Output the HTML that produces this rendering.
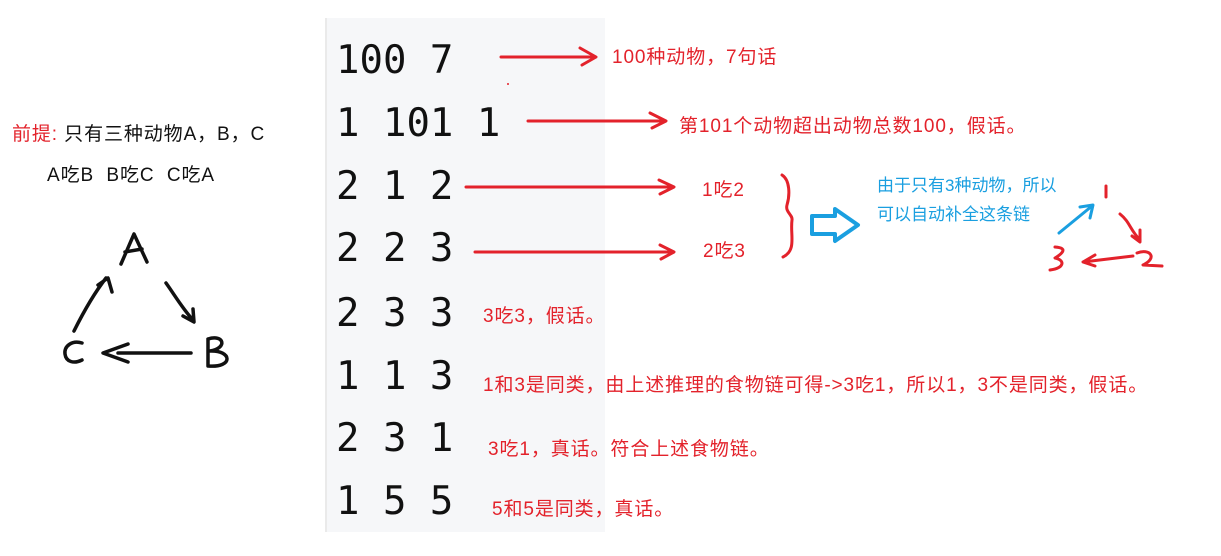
<!DOCTYPE html>
<html><head><meta charset="utf-8"><style>
body{margin:0;width:1221px;height:556px;background:#fff;position:relative;overflow:hidden;font-family:"Liberation Sans","Noto Sans CJK SC",sans-serif}
.code{position:absolute;left:325px;top:18px;width:278px;height:514px;background:#f6f7f9;border-left:2px solid #eaeaea}
.c{position:absolute;left:336px;font-family:"DejaVu Sans Mono","Liberation Mono",monospace;font-size:39px;color:#111;line-height:1}
.r{position:absolute;color:#e3222b;font-size:19px;letter-spacing:0.9px;white-space:nowrap}
.k{position:absolute;color:#111;font-size:19px;letter-spacing:0.9px;white-space:nowrap}
.b{position:absolute;color:#1a9fe0;font-size:17px;line-height:29px}
svg{position:absolute;left:0;top:0}
</style></head><body>
<div class="code"></div>
<div class="c" style="top:41px">100 7</div>
<div class="c" style="top:104px">1 101 1</div>
<div class="c" style="top:167px">2 1 2</div>
<div class="c" style="top:229px">2 2 3</div>
<div class="c" style="top:294px">2 3 3</div>
<div class="c" style="top:357px">1 1 3</div>
<div class="c" style="top:419px">2 3 1</div>
<div class="c" style="top:482px">1 5 5</div>

<div class="r" style="left:612px;top:42px">100种动物，7句话</div>
<div class="r" style="left:679px;top:111px">第101个动物超出动物总数100，假话。</div>
<div class="r" style="left:702px;top:175px">1吃2</div>
<div class="r" style="left:703px;top:236px">2吃3</div>
<div class="r" style="left:483px;top:301px">3吃3，假话。</div>
<div class="r" style="left:483px;top:370px">1和3是同类，由上述推理的食物链可得-&gt;3吃1，所以1，3不是同类，假话。</div>
<div class="r" style="left:488px;top:434px">3吃1，真话。符合上述食物链。</div>
<div class="r" style="left:492px;top:494px">5和5是同类，真话。</div>

<div class="k" style="left:12px;top:119px"><span style="color:#e3222b">前提:</span> 只有三种动物A，B，C</div>
<div class="k" style="left:47px;top:160px">A吃B&nbsp; B吃C&nbsp; C吃A</div>
<div class="b" style="left:877px;top:171px">由于只有3种动物，所以<br>可以自动补全这条链</div>

<svg width="1221" height="556" fill="none" stroke-linecap="round" stroke-linejoin="round">
<g stroke="#e3222b" stroke-width="3">
<path d="M501 57H595M580 48L596 57L582 65"/>
<path d="M528 121H665M650 113L666 121L652 128"/>
<path d="M466 187H673M659 180L674 187L660 194"/>
<path d="M475 252H673M660 245L674 252L661 259"/>
<path d="M782 175C790 180 790 195 787 205C785 212 793 215 792 220C790 235 797 250 783 257"/>
<path d="M1106 186V197M1120 214C1130 222 1130 230 1140 240M1132 236L1140 242L1140 230M1133 256L1083 262M1095 255L1083 262L1095 266M1055 247C1070 248 1060 255 1055 258C1065 260 1065 268 1050 270M1137 253C1150 248 1158 258 1143 265L1162 266"/>
</g>
<path d="M812 216H835V209L858 225L835 241V234H812Z" stroke="#1a9fe0" stroke-width="4"/>
<path d="M1059 233L1092 206M1080 207L1093 205L1090 218" stroke="#1a9fe0" stroke-width="3"/>
<g stroke="#111" stroke-width="3.5">
<path d="M121 264L134 234L147 262M125 252L142 249"/>
<path d="M74 331C82 315 92 296 106 278M98 285L108 278L112 292"/>
<path d="M166 283C174 294 182 308 193 320M183 316L194 322L193 309"/>
<path d="M191 353H118M128 344L103 353L128 362"/>
<path d="M82 343C72 340 64 346 65 354C66 362 74 364 82 360"/>
<path d="M208 339V366M208 339C224 334 228 348 210 351C232 350 234 368 208 366"/>
</g>
<circle cx="508" cy="84" r="1" fill="#e3222b"/>
</svg>
</body></html>
